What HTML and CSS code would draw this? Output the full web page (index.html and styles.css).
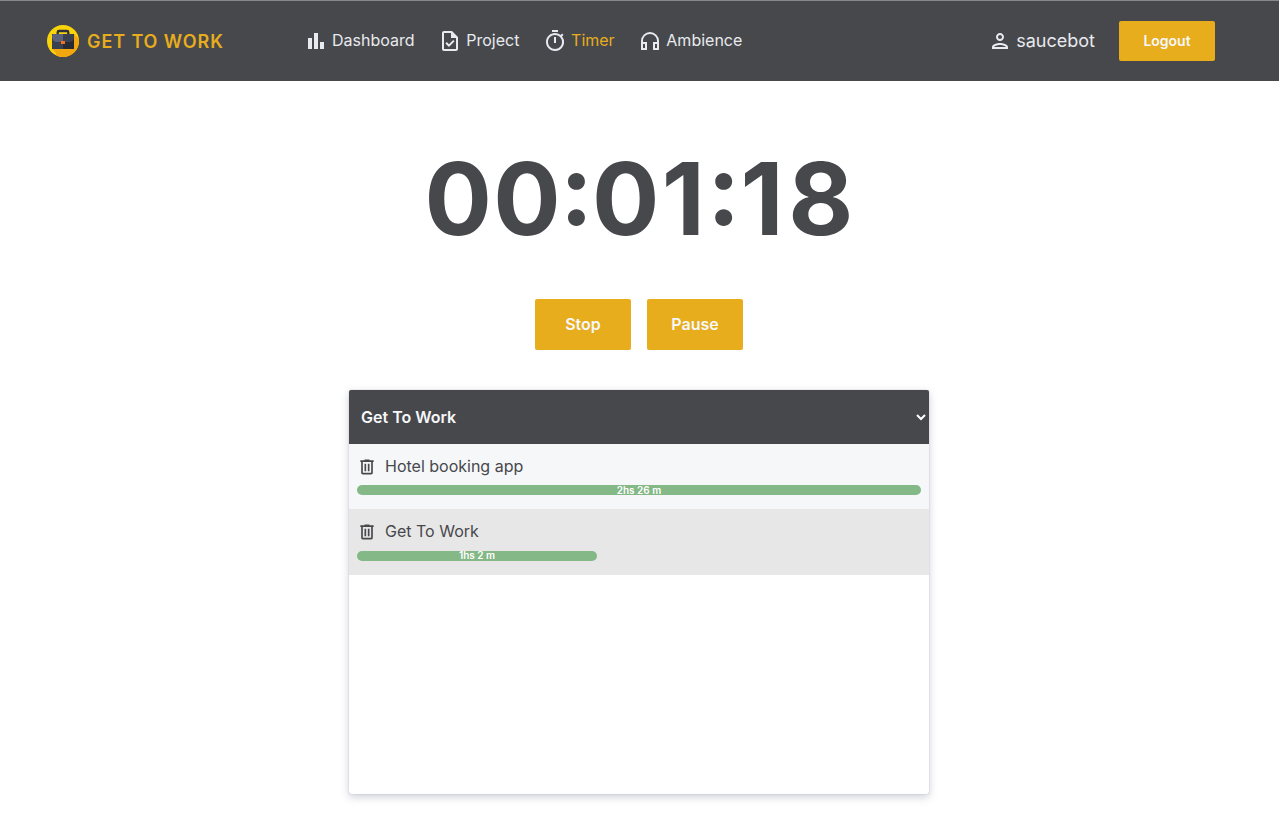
FILE: index.html
```html
<!DOCTYPE html>
<html lang="en">
<head>
<meta charset="utf-8">
<title>Get To Work</title>
<link rel="stylesheet" href="styles.css">
</head>
<body>
<header class="navbar">
  <a class="brand">
    <svg class="logo" viewBox="0 0 32 32">
      <defs><clipPath id="disc"><circle cx="16" cy="16" r="16"/></clipPath></defs>
      <g clip-path="url(#disc)">
        <rect width="32" height="32" fill="#fad40b"/>
        <path d="M5 24L9 28V32H32V14L27 9V24Z" fill="#f3a70f"/>
        <path d="M10.7 10V7.3Q10.7 6 12 6H20Q21.300 6 21.300 7.300V10" fill="none" stroke="#2b303b" stroke-width="2.300"/>
        <path d="M5 9H27V24H5Z" fill="#262b33"/>
        <path d="M5 15H16V24H5Z" fill="#394050"/>
        <path d="M6 9H16V17H10Q6 17 5 13V10Z" fill="#5b6179"/>
        <path d="M16 9H26L27 10V13Q26 17 22 17H16Z" fill="#3a404e"/>
        <rect x="14" y="16" width="4" height="3" fill="#f4701f"/>
      </g>
    </svg>
    <span class="brand-name">GET TO WORK</span>
  </a>
  <nav class="links">
    <a class="link"><svg class="icon" viewBox="0 0 24 24"><path d="M4 9h4v11H4zm12 4h4v7h-4zm-6-9h4v16h-4z"/></svg><span>Dashboard</span></a>
    <a class="link"><svg class="icon" viewBox="0 0 24 24"><path d="M14 2H6c-1.100 0-1.990.9-1.990 2L4 20c0 1.100.89 2 1.990 2H18c1.100 0 2-.9 2-2V8l-6-6zm4 18H6V4h7v5h5v11zm-9.180-6.950L7.400 14.460 10.940 18l5.660-5.660-1.410-1.410-4.240 4.240-2.130-2.120z"/></svg><span>Project</span></a>
    <a class="link active"><svg class="icon" viewBox="0 0 24 24"><path d="M15 1H9v2h6V1zm-4 13h2V8h-2v6zm8.030-6.610l1.420-1.420c-.43-.51-.9-.99-1.410-1.410l-1.420 1.420A8.962 8.962 0 0 0 12 4c-4.970 0-9 4.030-9 9s4.020 9 9 9a8.994 8.994 0 0 0 7.030-14.610zM12 20c-3.870 0-7-3.130-7-7s3.130-7 7-7 7 3.130 7 7-3.130 7-7 7z"/></svg><span>Timer</span></a>
    <a class="link"><svg class="icon" viewBox="0 0 24 24"><path d="M12 3a9 9 0 0 0-9 9v9h6v-8H5v-1c0-3.870 3.130-7 7-7s7 3.130 7 7v1h-4v8h6v-9a9 9 0 0 0-9-9zM7 15v4H5v-4h2zm12 4h-2v-4h2v4z"/></svg><span>Ambience</span></a>
  </nav>
  <div class="account">
    <svg class="icon" viewBox="0 0 24 24"><path d="M12 6c1.100 0 2 .9 2 2s-.9 2-2 2-2-.9-2-2 .9-2 2-2m0 10c2.700 0 5.800 1.290 6 2H6c.23-.72 3.310-2 6-2m0-12C9.790 4 8 5.790 8 8s1.790 4 4 4 4-1.790 4-4-1.790-4-4-4zm0 10c-2.670 0-8 1.340-8 4v2h16v-2c0-2.660-5.330-4-8-4z"/></svg>
    <span class="username">saucebot</span>
    <button class="button logout">Logout</button>
  </div>
</header>
<main class="timer-page">
  <h1 class="clock"><span class="digit">0</span><span class="digit">0</span><span class="colon">:</span><span class="digit">0</span><span class="digit one">1</span><span class="colon">:</span><span class="digit one">1</span><span class="digit eight">8</span></h1>
  <div class="controls">
    <button class="button control">Stop</button>
    <button class="button control">Pause</button>
  </div>
  <section class="panel">
    <div class="picker">
      <span>Get To Work</span>
      <svg class="chevron" viewBox="0 0 10 7"><path d="M1 1L5 5L9 1"/></svg>
    </div>
    <ul class="tasks">
      <li class="task">
        <div class="task-title"><svg class="trash" viewBox="0 0 24 24"><path d="M7 21q-.825 0-1.412-.587Q5 19.825 5 19V6H4V4h5V3h6v1h5v2h-1v13q0 .825-.587 1.413Q17.825 21 17 21ZM17 6H7v13h10ZM9 17h2V8H9Zm4 0h2V8h-2Z"/></svg><span>Hotel booking app</span></div>
        <div class="bar" style="width:564px">2hs 26 m</div>
      </li>
      <li class="task">
        <div class="task-title"><svg class="trash" viewBox="0 0 24 24"><path d="M7 21q-.825 0-1.412-.587Q5 19.825 5 19V6H4V4h5V3h6v1h5v2h-1v13q0 .825-.587 1.413Q17.825 21 17 21ZM17 6H7v13h10ZM9 17h2V8H9Zm4 0h2V8h-2Z"/></svg><span>Get To Work</span></div>
        <div class="bar" style="width:240px">1hs 2 m</div>
      </li>
    </ul>
  </section>
</main>
</body>
</html>
```

FILE: styles.css
```css
* { box-sizing: border-box; margin: 0; padding: 0; }
body { height: 829px; overflow: hidden; background: #fff; color: #47484c; font-family: Inter, sans-serif; font-size: 16px; }
.navbar { display: flex; align-items: center; height: 81px; padding: 0 64px 0 47px; background: #47484c; border-top: 1px solid #858887; color: #e8eaee; }
.brand { display: flex; align-items: center; gap: 8px; width: 257px; }
.logo { width: 32px; height: 32px; }
.brand-name { color: #e7ad1c; font-size: 18px; font-weight: 600; letter-spacing: .9px; white-space: nowrap; }
.links { display: flex; gap: 23.7px; }
.link { display: flex; align-items: center; gap: 4px; line-height: 24px; }
.link span { padding-bottom: 2px; }
.icon { width: 24px; height: 24px; fill: #e8eaf0; flex: none; }
.active span { color: #e7ad1c; }
.account { display: flex; align-items: center; margin-left: auto; }
.username { margin: 0 24px 0 4px; padding-bottom: 1px; font-size: 18px; }
.button { border: 0; border-radius: 2px; padding-bottom: 2px; background: #e7ad1c; color: #f6f7fa; font-family: inherit; font-weight: 600; }
.logout { width: 96px; height: 40px; font-size: 14px; }
.timer-page { display: flex; flex-direction: column; align-items: center; padding-right: 1px; }
.clock { display: flex; height: 121px; margin-top: 57px; font-size: 100px; line-height: 121px; font-weight: 700; }
.digit, .colon { display: flex; justify-content: center; width: 68.7px; }
.colon { width: 30.2px; line-height: 102px; }
.one { width: 48.5px; padding-right: 2px; }
.eight { width: 66.8px; }
.controls { display: flex; gap: 16px; margin-top: 40px; }
.control { width: 96px; height: 51px; font-size: 16px; }
.panel { width: 580px; height: 404px; margin-top: 40px; border-radius: 2px; overflow: hidden; box-shadow: 0 0 1px rgba(65,70,105,.5), 0 3px 8px rgba(65,70,105,.26); }
.picker { display: flex; align-items: center; justify-content: space-between; height: 54px; padding: 0 3px 0 12px; background: #47484c; color: #f6f7fa; font-weight: 600; }
.chevron { width: 10px; height: 7px; fill: none; stroke: #fff; stroke-width: 2; }
.tasks { list-style: none; }
.task { height: 65px; padding: 10px 8px 0; background: #f5f7f9; }
.task:nth-child(even) { height: 66px; background: #e7e7e7; }
.task-title { display: flex; align-items: center; gap: 8px; height: 25px; }
.task-title span { padding-bottom: 2px; }
.trash { width: 20px; height: 20px; fill: #47484c; }
.bar { height: 10px; margin-top: 6px; border-radius: 5px; background: #84b886; color: #fff; font-size: 10px; line-height: 10px; font-weight: 600; text-align: center; }
.task:nth-child(even) .bar { margin-top: 7px; line-height: 8px; }
```
